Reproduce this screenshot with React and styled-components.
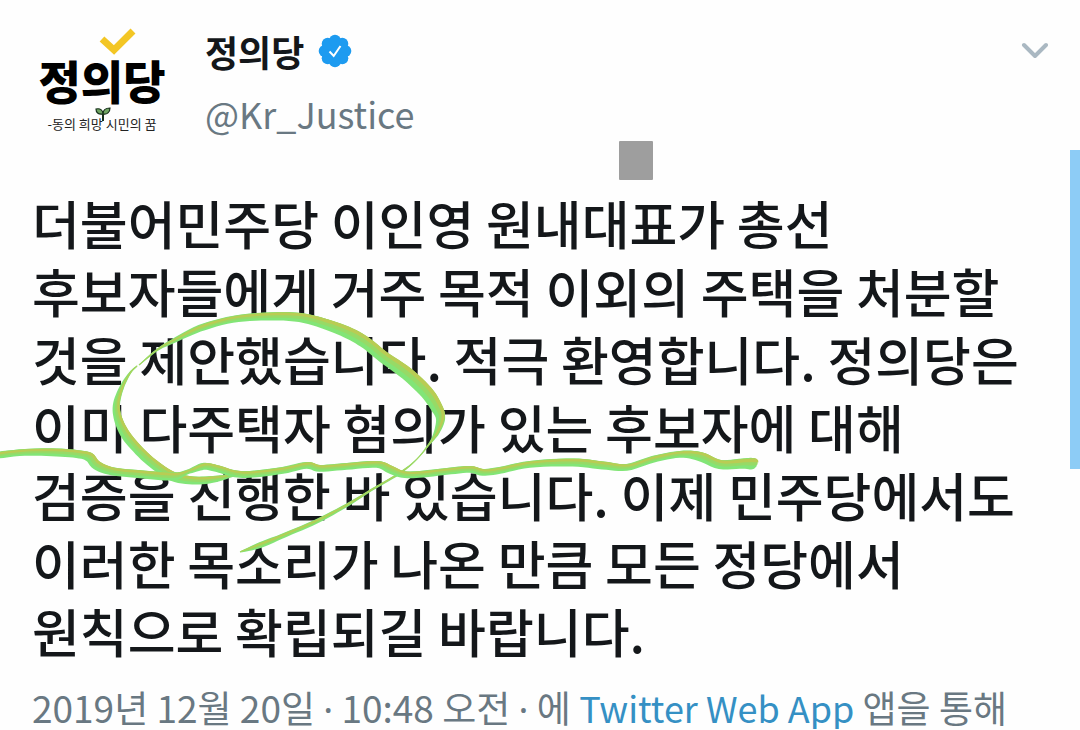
import React from "react";
import styled, { createGlobalStyle } from "styled-components";

const GlobalStyle = createGlobalStyle`
  * { box-sizing: border-box; }
  body {
    margin: 0;
    background: #fefefe;
    color: #14171a;
    font-family: "Noto Sans CJK KR", sans-serif;
  }
`;

const Tweet = styled.article`
  position: relative;
  padding: 20px 32px 0;
`;

const Header = styled.header`
  display: flex;
  align-items: flex-start;
`;

const Avatar = styled.a`
  position: relative;
  display: flex;
  flex-direction: column;
  align-items: center;
  flex: none;
  width: 140px;
  margin-right: 33px;
  padding-top: 34px;
  color: #000;
  text-decoration: none;
  white-space: nowrap;
`;

const LogoName = styled.span`
  font-size: 46px;
  font-weight: 900;
  line-height: 50px;
`;

const LogoSlogan = styled.span`
  font-size: 13px;
  line-height: 20px;
  margin-top: 10px;
  color: #222;
`;

const LogoMark = styled.svg`
  position: absolute;
  left: 0;
  top: 0;
`;

const Author = styled.div`
  display: flex;
  flex-direction: column;
  flex: 1;
  line-height: 62px;
`;

const NameRow = styled.div`
  display: flex;
  align-items: center;
  gap: 14px;
`;

const Name = styled.a`
  color: #14171a;
  font-size: 36px;
  font-weight: 700;
  text-decoration: none;
`;

const Handle = styled.a`
  color: #697882;
  font-size: 36px;
  text-decoration: none;
`;

const MenuButton = styled.button`
  display: flex;
  padding: 16px 0;
  border: 0;
  background: none;
`;

const Body = styled.p`
  margin: 45px 0 0;
  font-size: 52px;
  font-weight: 500;
  line-height: 68px;
  word-break: keep-all;
`;

const Meta = styled.footer`
  margin-top: 20px;
  color: #697882;
  font-size: 37px;
  line-height: 44px;
  white-space: nowrap;
`;

const Dot = styled.span`
  font-family: "Noto Sans", sans-serif;
  line-height: 1;
`;

const SourceLink = styled.a`
  color: #3590c4;
  font-size: 36px;
  line-height: 1;
  text-decoration: none;
`;

const Redaction = styled.span`
  position: absolute;
  left: 619px;
  top: 141px;
  width: 34px;
  height: 39px;
  border-radius: 1px;
  background: #9e9e9e;
`;

const ScrollThumb = styled.span`
  position: absolute;
  right: 0;
  top: 150px;
  width: 10px;
  height: 319px;
  background: #8dccf6;
`;

const Marker = styled.svg`
  position: absolute;
  left: 0;
  top: 0;
  pointer-events: none;
`;

// Each marker point is [x, y, thickness].
const UNDERLINE = [
  [-4, 455, 6], [25, 452, 6], [57, 452, 7], [80, 454, 7], [90, 457, 8], [97, 465, 8],
  [113, 471, 7], [143, 474, 7], [173, 476, 7], [187, 472, 4], [200, 467, 6], [207, 466, 6],
  [220, 469, 6], [233, 473, 6], [250, 474, 6], [283, 470, 6], [307, 465, 6], [320, 468, 6],
  [347, 466, 6], [377, 464, 6], [390, 469, 7], [403, 474, 6], [420, 474, 6], [447, 471, 6],
  [470, 469, 6], [483, 472, 6], [500, 470, 6], [530, 464, 6], [573, 462, 7], [603, 465, 7],
  [627, 467, 6], [653, 459, 6], [680, 454, 6], [700, 456, 8], [720, 464, 8], [743, 463, 9],
  [753, 463, 10], [757, 463, 5],
];

const LOOP_TOP = [
  [139, 365, 1], [157, 350, 2], [173, 341, 4], [200, 328, 6], [233, 319, 6], [267, 316, 7],
  [300, 317, 8], [327, 324, 9], [350, 333, 10], [367, 343, 10], [383, 356, 10], [407, 373, 11],
  [427, 392, 11], [437, 407, 10], [441, 418, 8], [437, 432, 5], [430, 443, 2], [417, 459, 1],
  [400, 473, 2], [373, 489, 2], [347, 505, 3], [317, 521, 4], [287, 534, 4], [260, 545, 5],
  [240, 552, 1],
];

const LOOP_LEFT = [
  [137, 366, 1], [130, 373, 2], [122, 387, 4], [117, 403, 6], [118, 417, 7], [125, 433, 8],
  [137, 448, 8], [153, 463, 8], [173, 476, 8], [193, 480, 7], [213, 479, 6], [235, 475, 2],
];

// Catmull-Rom interpolation keeps the hand-drawn line smooth between points.
function smooth(points) {
  const out = [];
  for (let i = 0; i < points.length - 1; i += 1) {
    const p0 = points[Math.max(i - 1, 0)];
    const p1 = points[i];
    const p2 = points[i + 1];
    const p3 = points[Math.min(i + 2, points.length - 1)];
    for (let s = 0; s < 6; s += 1) {
      const t = s / 6;
      out.push(
        p1.map(
          (_, k) =>
            0.5 *
            (2 * p1[k] +
              (p2[k] - p0[k]) * t +
              (2 * p0[k] - 5 * p1[k] + 4 * p2[k] - p3[k]) * t * t +
              (3 * p1[k] - p0[k] - 3 * p2[k] + p3[k]) * t * t * t)
        )
      );
    }
  }
  out.push(points[points.length - 1]);
  return out;
}

function ribbon(points, scale, shift) {
  const line = smooth(points);
  const left = [];
  const right = [];
  line.forEach(([x, y, w], i) => {
    const a = line[Math.max(i - 1, 0)];
    const b = line[Math.min(i + 1, line.length - 1)];
    const len = Math.hypot(b[0] - a[0], b[1] - a[1]) || 1;
    const nx = (-(b[1] - a[1]) / len) * (w / 2) * scale;
    const ny = ((b[0] - a[0]) / len) * (w / 2) * scale;
    const cx = x + w * shift;
    const cy = y - w * shift;
    left.push(`${(cx + nx).toFixed(1)},${(cy + ny).toFixed(1)}`);
    right.unshift(`${(cx - nx).toFixed(1)},${(cy - ny).toFixed(1)}`);
  });
  return `M${left.concat(right).join("L")}Z`;
}

function MarkerStroke({ points }) {
  return (
    <g>
      <path d={ribbon(points, 1.15, -0.06)} fill="#82e577" />
      <path d={ribbon(points, 0.75, 0.12)} fill="#97da66" />
      <path d={ribbon(points, 0.36, 0.26)} fill="#b9cc54" />
    </g>
  );
}

function VerifiedBadge() {
  const lobes = [0, 1, 2, 3, 4, 5, 6, 7].map((n) => (n * Math.PI) / 4);
  return (
    <svg width="34" height="34" viewBox="0 0 34 34" role="img" aria-label="인증된 계정">
      <g fill="#1d9bf0">
        <circle cx="17" cy="17" r="13" />
        {lobes.map((a) => (
          <circle key={a} cx={17 + 10.3 * Math.cos(a)} cy={17 + 10.3 * Math.sin(a)} r="6" />
        ))}
      </g>
      <path d="M11.5 17.5L15.7 22L22.5 12" fill="none" stroke="#fff" strokeWidth="2" />
    </svg>
  );
}

export default function App() {
  return (
    <>
      <GlobalStyle />
      <Tweet>
        <Header>
          <Avatar href="#profile">
            <LogoName>정의당</LogoName>
            <LogoSlogan>-동의 희망 시민의 꿈</LogoSlogan>
            <LogoMark width="140" height="120" viewBox="0 0 140 120" aria-hidden="true">
              <path d="M70 19L82 30L101 11" fill="none" stroke="#f3c624" strokeWidth="7" />
              <path d="M71 101V92" fill="none" stroke="#17301b" strokeWidth="2" />
              <path
                d="M71 94C66 95 64 92 64 89C68 88 71 90 71 94ZM71 94C71 90 74 88 78 88C78 92 75 95 71 94Z"
                fill="#6fa562"
                stroke="#17301b"
                strokeWidth="1.2"
              />
            </LogoMark>
          </Avatar>
          <Author>
            <NameRow>
              <Name href="#profile">정의당</Name>
              <VerifiedBadge />
            </NameRow>
            <Handle href="#profile">@Kr_Justice</Handle>
          </Author>
          <MenuButton type="button" aria-label="더 보기">
            <svg width="28" height="28" viewBox="0 0 28 28" aria-hidden="true">
              <path
                d="M4 9L15 20L26 9"
                fill="none"
                stroke="#aab8c2"
                strokeWidth="4"
                strokeLinecap="round"
                strokeLinejoin="round"
              />
            </svg>
          </MenuButton>
        </Header>
        <Body>
          더불어민주당 이인영 원내대표가 총선 후보자들에게 거주 목적 이외의 주택을 처분할 것을
          제안했습니다. 적극 환영합니다. 정의당은 이미 다주택자 혐의가 있는 후보자에 대해 검증을
          진행한 바 있습니다. 이제 민주당에서도 이러한 목소리가 나온 만큼 모든 정당에서 원칙으로
          확립되길 바랍니다.
        </Body>
        <Meta>
          <time dateTime="2019-12-20T10:48">
            2019년 12월 20일 <Dot>·</Dot> 10:48 오전
          </time>{" "}
          <Dot>·</Dot> 에 <SourceLink href="#source">Twitter Web App</SourceLink> 앱을 통해
        </Meta>
        <Redaction />
        <ScrollThumb />
        <Marker width="1080" height="729" viewBox="0 0 1080 729" aria-hidden="true">
          <MarkerStroke points={LOOP_TOP} />
          <MarkerStroke points={LOOP_LEFT} />
          <MarkerStroke points={UNDERLINE} />
        </Marker>
      </Tweet>
    </>
  );
}
